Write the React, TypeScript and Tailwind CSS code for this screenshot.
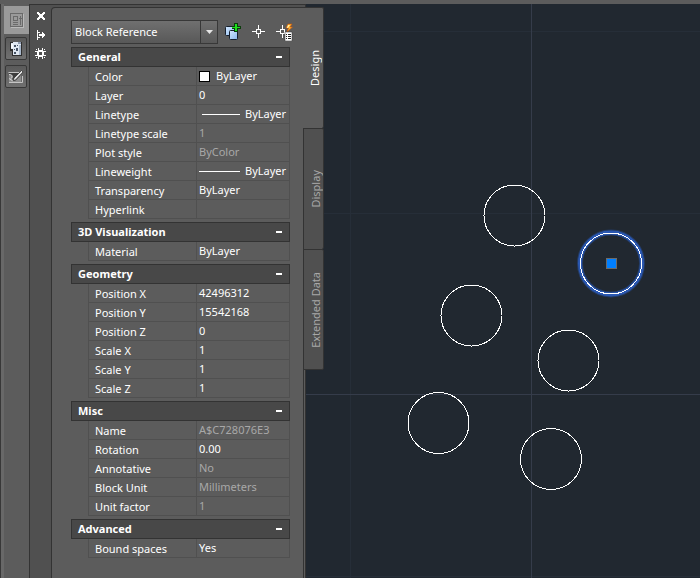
import { useState } from "react";
import clsx from "clsx";

type Property = {
  name: string;
  value: string;
  readOnly?: boolean;
  sample?: "swatch" | "line" | "wideLine";
};

type Section = { title: string; properties: Property[] };

const sections: Section[] = [
  {
    title: "General",
    properties: [
      { name: "Color", value: "ByLayer", sample: "swatch" },
      { name: "Layer", value: "0" },
      { name: "Linetype", value: "ByLayer", sample: "line" },
      { name: "Linetype scale", value: "1", readOnly: true },
      { name: "Plot style", value: "ByColor", readOnly: true },
      { name: "Lineweight", value: "ByLayer", sample: "wideLine" },
      { name: "Transparency", value: "ByLayer" },
      { name: "Hyperlink", value: "" },
    ],
  },
  {
    title: "3D Visualization",
    properties: [{ name: "Material", value: "ByLayer" }],
  },
  {
    title: "Geometry",
    properties: [
      { name: "Position X", value: "42496312" },
      { name: "Position Y", value: "15542168" },
      { name: "Position Z", value: "0" },
      { name: "Scale X", value: "1" },
      { name: "Scale Y", value: "1" },
      { name: "Scale Z", value: "1" },
    ],
  },
  {
    title: "Misc",
    properties: [
      { name: "Name", value: "A$C728076E3", readOnly: true },
      { name: "Rotation", value: "0.00" },
      { name: "Annotative", value: "No", readOnly: true },
      { name: "Block Unit", value: "Millimeters", readOnly: true },
      { name: "Unit factor", value: "1", readOnly: true },
    ],
  },
  {
    title: "Advanced",
    properties: [{ name: "Bound spaces", value: "Yes" }],
  },
];

const tabs = ["Design", "Display", "Extended Data"];

const circles = [
  { cx: 208.5, cy: 211.5 },
  { cx: 165.5, cy: 311.5 },
  { cx: 262.5, cy: 356.5 },
  { cx: 132.5, cy: 419 },
  { cx: 245, cy: 455 },
];

function PropertiesIcon() {
  return (
    <svg width="16" height="16" fill="none" stroke="#6a6a6a" shapeRendering="crispEdges">
      <path d="M1.500 1.500h12v13h-12z" />
      <path d="M4.500 4.500h4v4h-4zM4 10.500h5M4 12.500h5M11.500 4v9M10 6.500h3" />
      <path d="M2 15.500h12.500V2" stroke="#bababa" />
    </svg>
  );
}

function BlockIcon() {
  return (
    <svg width="16" height="18" fill="none" shapeRendering="crispEdges">
      <path d="M2 2h12v14H4v-5H2z" fill="#2e2e2e" />
      <path d="M5 2h8v13H5V9H3V3h2z" fill="#dfe7f1" />
      <path d="M3 4h2v4H3z" fill="#f6f9fd" />
      <path d="M10 2h3v2h-3z" fill="#8f9cb0" />
      <path d="M11 5h2v10h-2z" fill="#a9b8cb" />
      <path d="M6 5h2v2H6zM9 5h1v1H9zM6 9h1v1H6zM8 8h2v3H8zM6 12h2v2H6z" fill="#465365" />
    </svg>
  );
}

function MarkupIcon() {
  return (
    <svg width="18" height="16" fill="none">
      <path d="M2 3h11v11H2z" fill="#3d3d3d" />
      <path d="M1.500 3.500h11M2 13.500h13.500V7" stroke="#c4c4c4" />
      <path d="M2 5c4 0 5 3 3 5 2 2 3 2 4 1l5-5v7H2z" fill="#8e8e8e" />
      <path d="M2 5.500c3 0 4 2 2 4M2 9.500l4 2.500" stroke="#d6d6d6" />
      <path
        d="M6 11.500L7 9l7.500-7.500 1.500 1.500-7.500 8z"
        fill="#e2e2e2"
        stroke="#262626"
        strokeWidth=".7"
      />
    </svg>
  );
}

function CloseIcon() {
  return (
    <svg width="10" height="10" fill="#fff" shapeRendering="crispEdges">
      <path d="M1 1h2v1h1v1h2V2h1V1h2v2H8v1H7v2h1v1h1v2H7V8H6V7H4v1H3v1H1V7h1V6h1V4H2V3H1z" />
    </svg>
  );
}

function AutoHideIcon() {
  return (
    <svg width="10" height="10" fill="#fff" shapeRendering="crispEdges">
      <path d="M1 0h1v10H1zM2 2h2v1H2zM2 7h2v1H2zM3 4h6v2H3zM6 2h1v6H6zM7 3h1v4H7z" />
    </svg>
  );
}

function GearIcon() {
  return (
    <svg width="11" height="11" fill="#fff" shapeRendering="crispEdges">
      <path d="M3 2h5v1h1v5H8v1H3V8H2V3h1zM4 4v3h3V4z" fillRule="evenodd" />
      <path d="M3 0h1v2H3zM7 0h1v2H7zM3 9h1v2H3zM7 9h1v2H7zM0 3h2v1H0zM0 7h2v1H0zM9 3h2v1H9zM9 7h2v1H9zM1 1h1v1H1zM9 1h1v1H9zM1 9h1v1H1zM9 9h1v1H9z" />
    </svg>
  );
}

function PickAddIcon() {
  return (
    <svg width="18" height="18" fill="none">
      <defs>
        <linearGradient id="pane" x2="1" y2="1">
          <stop stopColor="#d4e8ff" />
          <stop offset="1" stopColor="#8ab8ee" />
        </linearGradient>
      </defs>
      <rect x="1.500" y="3.500" width="9" height="9" rx="1" fill="url(#pane)" stroke="#16202e" />
      <rect x="5.500" y="7.500" width="8" height="9" rx="1" fill="url(#pane)" stroke="#16202e" />
      <path d="M10 0h4v3h3v3h-3v3h-4V6H8V3h2z" fill="#0b3d0b" />
      <path d="M11 1h2v3h3v1h-3v3h-2V5H8V4h3z" fill="#1fe01f" shapeRendering="crispEdges" />
    </svg>
  );
}

function SelectIcon() {
  return (
    <svg width="14" height="14" fill="#fff" shapeRendering="crispEdges">
      <path d="M4 4h5v5H4zM5 5v3h3V5z" fillRule="evenodd" />
      <path d="M6 0h1v4H6zM6 9h1v4H6zM0 6h4v1H0zM9 6h4v1H9z" />
    </svg>
  );
}

function QuickSelectIcon() {
  return (
    <svg width="18" height="18" fill="none">
      <g fill="#fff" shapeRendering="crispEdges">
        <path d="M4 6h5v5H4zM5 7v3h3V7z" fillRule="evenodd" />
        <path d="M6 2h1v4H6zM6 11h1v4H6zM0 8h4v1H0z" />
      </g>
      <path d="M12 1h4l-2 3h2.500L11 9l1.500-4H10z" fill="#ffb22e" stroke="#c7530c" strokeWidth=".6" />
      <path d="M12 2h2l-2 3h-1z" fill="#fff0a8" />
      <path d="M9 9h7v9H9z" fill="#fff" stroke="#333" strokeWidth=".5" />
      <path
        d="M10 11h1v1h-1zM12 11h3v1h-3zM10 13h1v1h-1zM12 13h3v1h-3zM10 15h1v1h-1zM12 15h3v1h-3z"
        fill="#222"
        shapeRendering="crispEdges"
      />
    </svg>
  );
}

function ToolStrip() {
  return (
    <div className="flex w-[29px] shrink-0 flex-col border-l border-[#383838] bg-[#5c5c5c]">
      <div className="flex grow flex-col border-l-3 border-[#686868] pt-0.5">
        <button
          aria-label="Properties"
          className="flex h-7 w-full items-center justify-center bg-[#9a9a9a]"
        >
          <PropertiesIcon />
        </button>
        <button
          aria-label="Blocks"
          className="mt-[3px] ml-px flex h-[23px] w-[22px] items-center justify-center rounded-xs border border-[#383838] bg-linear-to-b from-[#5a5a5a] to-[#707070]"
        >
          <BlockIcon />
        </button>
        <button
          aria-label="Markup"
          className="mt-[5px] ml-px flex h-[23px] w-[22px] items-center justify-center rounded-xs border border-[#383838] bg-linear-to-b from-[#5a5a5a] to-[#707070]"
        >
          <MarkupIcon />
        </button>
      </div>
    </div>
  );
}

function PropertyValue({ property }: { property: Property }) {
  if (property.sample === "swatch") {
    return (
      <span className="flex items-center gap-1.5">
        <span className="size-[11px] border border-black bg-white" />
        {property.value}
      </span>
    );
  }
  if (property.sample) {
    return (
      <span className="flex items-center gap-[5px]">
        <span
          className={clsx(
            "h-px bg-white",
            property.sample === "line" ? "ml-[3px] w-[38px]" : "w-[41px]"
          )}
        />
        {property.value}
      </span>
    );
  }
  return <>{property.value}</>;
}

function PropertySection({ section }: { section: Section }) {
  const [open, setOpen] = useState(true);

  return (
    <section className="mt-[3px]">
      <button
        aria-expanded={open}
        onClick={() => setOpen(!open)}
        className="flex h-5 w-full items-center justify-between border border-[#333] bg-[#484848] pr-[7px] pl-1.5 font-bold text-white"
      >
        {section.title}
        <span className={clsx("w-1.5 bg-white", open ? "h-0.5" : "h-1.5")} />
      </button>
      {open && (
        <div className="pl-[17px]">
          <table className="w-full table-fixed border-separate border-spacing-0">
            <tbody>
              {section.properties.map((property) => (
                <tr key={property.name} className="h-[19px]">
                  <th
                    scope="row"
                    className="w-[108px] border-b border-l border-[#505050] p-0 pt-0.5 pl-1.5 text-left leading-4 font-normal whitespace-nowrap text-white"
                  >
                    {property.name}
                  </th>
                  <td
                    className={clsx(
                      "border-x border-b border-[#505050] p-0 pl-0.5 leading-[18px] whitespace-nowrap",
                      property.readOnly ? "text-[#a8a8a8]" : "text-white"
                    )}
                  >
                    <PropertyValue property={property} />
                  </td>
                </tr>
              ))}
            </tbody>
          </table>
        </div>
      )}
    </section>
  );
}

function Palette() {
  const [activeTab, setActiveTab] = useState("Design");

  return (
    <div className="relative z-10 flex shrink-0 border-t border-r border-[#333] bg-[#5c5c5c]">
      <div className="flex w-[22px] flex-col items-center gap-2 border-l border-[#333] bg-[#505050] pt-[5px]">
        <button aria-label="Close" className="flex h-[11px] items-center">
          <CloseIcon />
        </button>
        <button aria-label="Auto-hide" className="flex h-[11px] items-center">
          <AutoHideIcon />
        </button>
        <button aria-label="Settings" className="flex h-[11px] items-center">
          <GearIcon />
        </button>
      </div>
      <div className="flex bg-[#505050] pt-0.5">
        <div className="w-[253px] rounded-tl border border-b-0 border-[#333] bg-[#5c5c5c] pt-3 pr-[13px] pb-5 pl-[19px]">
          <div className="flex items-center">
            <div className="relative mr-1.5">
              <select
                aria-label="Object type"
                className="block h-6 w-[147px] appearance-none border border-[#383838] bg-linear-to-b from-[#707070] to-[#585858] pl-[3px] text-white"
              >
                <option>Block Reference</option>
              </select>
              <span className="pointer-events-none absolute inset-y-px right-px flex w-[17px] items-center justify-center border-l border-[#383838]">
                <svg width="7" height="4" fill="#e6e6e6">
                  <path d="M0 0h7L3.500 4z" />
                </svg>
              </span>
            </div>
            <button aria-label="Toggle pick add">
              <PickAddIcon />
            </button>
            <button aria-label="Select objects" className="ml-2.5">
              <SelectIcon />
            </button>
            <button aria-label="Quick select" className="-mr-1 ml-2.5">
              <QuickSelectIcon />
            </button>
          </div>
          {sections.map((section) => (
            <PropertySection key={section.title} section={section} />
          ))}
        </div>
        <div className="w-px bg-[#5c5c5c]" />
      </div>
      <div role="tablist" className="absolute top-0.5 left-[274px] w-[21px]">
        {tabs.map((tab) => (
          <button
            key={tab}
            role="tab"
            aria-selected={tab === activeTab}
            onClick={() => setActiveTab(tab)}
            className={clsx(
              "flex h-[121px] w-full items-center justify-center rounded-r-xs border-t border-r border-[#333] pl-1 last:border-b",
              tab === activeTab
                ? "bg-[#5c5c5c] text-white"
                : "border-l bg-[#505050] text-[#a8a8a8]"
            )}
          >
            <span className="rotate-180 [writing-mode:vertical-rl]">{tab}</span>
          </button>
        ))}
      </div>
    </div>
  );
}

function Drawing() {
  return (
    <main className="relative min-w-0 grow overflow-hidden bg-[#212830]">
      <svg className="absolute inset-0 size-full" fill="none" shapeRendering="crispEdges">
        <g stroke="#262e38">
          <line x1="0" x2="100%" y1="27.500" y2="27.500" />
          <line x1="0" x2="100%" y1="209.500" y2="209.500" />
          <line x1="0" x2="100%" y1="572.500" y2="572.500" />
          <line x1="44.500" x2="44.500" y1="0" y2="100%" />
        </g>
        <g stroke="#353c4a">
          <line x1="0" x2="100%" y1="390.500" y2="390.500" />
          <line x1="225.500" x2="225.500" y1="0" y2="100%" />
        </g>
        {circles.map((circle) => (
          <circle key={circle.cx} cx={circle.cx} cy={circle.cy} r="30.500" stroke="#fff" />
        ))}
        <g shapeRendering="auto">
          <circle cx="305" cy="259.500" r="31" stroke="#2857b4" strokeOpacity=".4" strokeWidth="6" />
          <circle cx="305" cy="259.500" r="31" stroke="#2c5fc4" strokeOpacity=".8" strokeWidth="4" />
        </g>
        <circle cx="305" cy="259.500" r="30.500" stroke="#fff" />
        <rect x="300.500" y="254.500" width="10" height="10" fill="#007fff" stroke="#6b6b6b" />
      </svg>
    </main>
  );
}

export default function App() {
  return (
    <div className="flex min-h-screen flex-col bg-[#5c5c5c] font-['Noto_Sans',sans-serif] text-[11px] leading-4">
      <div className="h-1" />
      <div className="flex grow">
        <ToolStrip />
        <Palette />
        <Drawing />
      </div>
    </div>
  );
}
